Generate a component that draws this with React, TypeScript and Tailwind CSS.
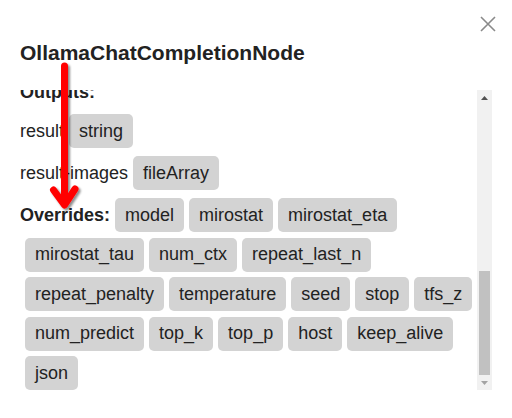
import React, { useLayoutEffect, useRef } from "react";

const Tag = ({ children }: { children: React.ReactNode }) => (
  <span className="ml-[5px] inline-flex h-[34px] items-center rounded-[5px] bg-[#d3d3d3] px-[10px] text-[18px] leading-[21px] text-[#222]">
    {children}
  </span>
);

const Row = ({ label, type }: { label: string; type: string }) => (
  <div className="flex h-[34px] items-center">
    <span className="text-[18px] leading-[21px] text-[#222]">{label}</span>
    <Tag>{type}</Tag>
  </div>
);

const overrides = [
  "model",
  "mirostat",
  "mirostat_eta",
  "mirostat_tau",
  "num_ctx",
  "repeat_last_n",
  "repeat_penalty",
  "temperature",
  "seed",
  "stop",
  "tfs_z",
  "num_predict",
  "top_k",
  "top_p",
  "host",
  "keep_alive",
  "json",
];

export default function App() {
  const ref = useRef<HTMLDivElement>(null);
  useLayoutEffect(() => {
    if (ref.current) ref.current.scrollTop = ref.current.scrollHeight;
  }, []);

  return (
    <div className="relative h-[418px] w-[512px] overflow-hidden bg-white font-['Liberation_Sans',Arial,sans-serif]">
      <button className="absolute right-[15px] top-[15px] flex h-[18px] w-[18px] items-center justify-center" aria-label="Close">
        <svg width="18" height="18" viewBox="0 0 18 18">
          <path d="M2 2 L16 16 M16 2 L2 16" stroke="#8a8a8a" strokeWidth="1.6" fill="none" />
        </svg>
      </button>

      <div className="px-[20px] pt-[41px]">
        <h1 className="text-[21px] font-bold leading-[24px] text-[#222]">OllamaChatCompletionNode</h1>

        <div className="mt-[25px] flex h-[300px]">
          <div ref={ref} className="min-w-0 flex-1 overflow-y-scroll [scrollbar-width:none]">
            <div className="h-[471px]">
              <p className="text-[18px] leading-[21px] text-[#222]">
                Makes a call to an Ollama chat model. The settings contain many options for tweaking the model's behavior.
              </p>
              <h2 className="mt-[16px] mb-[11px] text-[18px] font-bold leading-[21px] text-[#222]">Inputs:</h2>
              <div className="flex flex-col gap-[8px]">
                <Row label="system-prompt" type="string" />
                <Row label="messages" type="chatMessageArray" />
                <Row label="images" type="fileArray" />
                <Row label="functions" type="gptFunctionArray" />
                <Row label="format" type="string" />
              </div>
            </div>

            <h2 className="mb-[11px] text-[18px] font-bold leading-[21px] text-[#222]">Outputs:</h2>
            <div className="flex flex-col gap-[8px]">
              <Row label="result" type="string" />
              <Row label="result-images" type="fileArray" />
              <div className="flex flex-wrap items-center gap-y-[5.5px]">
                <span className="text-[18px] font-bold leading-[21px] text-[#222]">Overrides:</span>
                {overrides.map((o) => (
                  <Tag key={o}>{o}</Tag>
                ))}
              </div>
            </div>
          </div>

          <div className="flex w-[15px] flex-col bg-[#f1f1f1]">
            <div className="flex h-[15px] items-center justify-center">
              <svg width="7" height="4" viewBox="0 0 7 4">
                <path d="M3.5 0 L7 4 L0 4 Z" fill="#505050" />
              </svg>
            </div>
            <div className="flex flex-1 flex-col justify-end px-[2px]">
              <div className="h-[104px] bg-[#c1c1c1]" />
            </div>
            <div className="flex h-[15px] items-center justify-center">
              <svg width="7" height="4" viewBox="0 0 7 4">
                <path d="M0 0 L7 0 L3.5 4 Z" fill="#a3a3a3" />
              </svg>
            </div>
          </div>
        </div>
      </div>

      <svg className="pointer-events-none absolute left-0 top-0" width="512" height="418" viewBox="0 0 512 418">
        <defs>
          <filter id="sh" x="-50%" y="-50%" width="200%" height="200%">
            <feDropShadow dx="2" dy="2" stdDeviation="1" floodColor="#000" floodOpacity="0.45" />
          </filter>
        </defs>
        <g filter="url(#sh)" stroke="#ff0000" strokeWidth="7" strokeLinecap="round" strokeLinejoin="round" fill="none">
          <path d="M64.5 66 L64.5 203" />
          <path d="M53.5 190 L64.5 205 L75 189" />
        </g>
      </svg>
    </div>
  );
}
